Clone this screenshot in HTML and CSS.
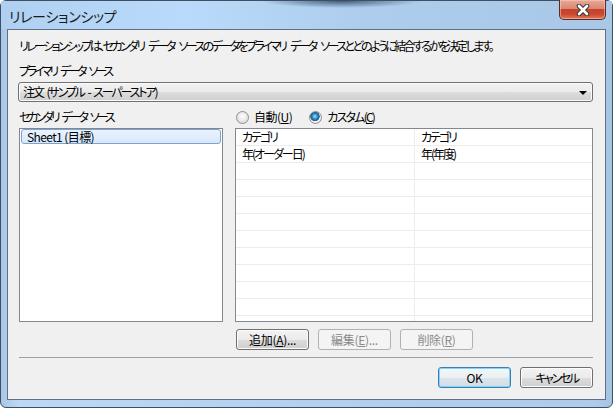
FILE: index.html
```html
<!DOCTYPE html>
<html lang="ja">
<head>
    <meta charset="UTF-8">
    <title>リレーションシップ</title>
    <link rel="stylesheet" href="styles.css">
</head>
<body>
    <div class="window">
        <!-- Title bar -->
        <div class="titlebar">
            <span class="title">リレーションシップ</span>
        </div>
        <div class="close-btn">
            <svg width="14" height="12" viewBox="0 0 14 12">
                <path d="M3 2 L11 10 M11 2 L3 10" stroke="#3a3a3a" stroke-width="4.6" stroke-linecap="round" fill="none"/>
                <path d="M3 2 L11 10 M11 2 L3 10" stroke="#ffffff" stroke-width="2.6" stroke-linecap="round" fill="none"/>
            </svg>
        </div>

        <!-- Dialog body -->
        <div class="client">
            <p class="intro">リレーションシップは、セカンダリ データ ソースのデータをプライマリ データ ソースとどのように結合するかを決定します。</p>

            <div class="label primary-label">プライマリ データ ソース</div>
            <div class="combo">
                <span class="combo-text">注文 (サンプル - スーパーストア)</span>
                <span class="arrow"></span>
            </div>

            <div class="panes">
                <div class="left-pane">
                    <div class="label">セカンダリ データ ソース</div>
                    <div class="listbox">
                        <div class="list-item selected">Sheet1 (目標)</div>
                    </div>
                </div>

                <div class="right-pane">
                    <div class="radios">
                        <label class="radio"><span class="radio-dot"></span><span class="radio-text">自動(<u>U</u>)</span></label>
                        <label class="radio checked"><span class="radio-dot"></span><span class="radio-text kana">カスタム(<u>C</u>)</span></label>
                    </div>
                    <div class="grid">
                        <div class="grid-row"><div class="cell">カテゴリ</div><div class="cell">カテゴリ</div></div>
                        <div class="grid-row"><div class="cell">年(オーダー日)</div><div class="cell">年(年度)</div></div>
                        <div class="grid-row"><div class="cell"></div><div class="cell"></div></div>
                        <div class="grid-row"><div class="cell"></div><div class="cell"></div></div>
                        <div class="grid-row"><div class="cell"></div><div class="cell"></div></div>
                        <div class="grid-row"><div class="cell"></div><div class="cell"></div></div>
                        <div class="grid-row"><div class="cell"></div><div class="cell"></div></div>
                        <div class="grid-row"><div class="cell"></div><div class="cell"></div></div>
                        <div class="grid-row"><div class="cell"></div><div class="cell"></div></div>
                        <div class="grid-row"><div class="cell"></div><div class="cell"></div></div>
                        <div class="grid-row"><div class="cell"></div><div class="cell"></div></div>
                        <div class="grid-row"><div class="cell"></div><div class="cell"></div></div>
                    </div>
                    <div class="grid-buttons">
                        <button class="btn">追加(<u>A</u>)...</button>
                        <button class="btn" disabled>編集(<u>E</u>)...</button>
                        <button class="btn" disabled>削除(<u>R</u>)</button>
                    </div>
                </div>
            </div>

            <div class="separator"></div>

            <div class="footer">
                <button class="btn default">OK</button>
                <button class="btn kana">キャンセル</button>
            </div>
        </div>
    </div>
</body>
</html>
```

FILE: styles.css
```css
/* Windows 7 style dialog */
html, body {
    margin: 0;
    padding: 0;
}

body {
    width: 613px;
    height: 408px;
    overflow: hidden;
    background: #ffffff;
    font-family: "Noto Sans CJK JP", sans-serif;
    font-size: 12px;
    color: #000000;
    font-feature-settings: "palt";
}

.window {
    position: relative;
    box-sizing: border-box;
    width: 613px;
    height: 408px;
    padding: 0 6px 7px 6px;
    border: 1px solid #3d4f63;
    border-radius: 6px;
    display: flex;
    flex-direction: column;
    background: linear-gradient(to right, #a9c7e6, #bcd8f4 3%, #b3d1ef 50%, #aecbe9 97%, #a5c3e2);
}

.titlebar {
    flex-shrink: 0;
    height: 28px;
    margin: 0 -6px;
    padding-left: 8px;
    display: flex;
    align-items: center;
    background:
        radial-gradient(ellipse 80px 7px at 340px 0, rgba(30, 55, 85, 0.75), rgba(30, 55, 85, 0) 100%),
        linear-gradient(to right, #afd0f0, #b9dafa 30%, #aecdec 60%, #a9c8e7);
}

.title {
    font-size: 14px;
    letter-spacing: -0.3px;
    color: #1b1b1b;
    margin-top: 1px;
}

.close-btn {
    position: absolute;
    top: -1px;
    right: 6px;
    width: 47px;
    height: 20px;
    box-sizing: border-box;
    border: 1px solid #5a2a22;
    border-top: none;
    border-radius: 0 0 5px 5px;
    background: linear-gradient(#e8a796, #d88a75 45%, #c5432b 50%, #c9492f 75%, #e07a5e);
    box-shadow: inset 0 0 0 1px rgba(255, 210, 200, 0.5);
    display: flex;
    align-items: center;
    justify-content: center;
}

.client {
    flex: 1;
    min-height: 0;
    border: 1px solid #5f7084;
    background: #f0f0f0;
    padding: 0 12px 0 10px;
}

.intro {
    margin: 9px 0 0 1px;
    line-height: 14px;
    white-space: nowrap;
    letter-spacing: -2.6px;
    word-spacing: 4.5px;
}

.label {
    line-height: 14px;
    margin-left: 1px;
    letter-spacing: -3.1px;
    word-spacing: 4.5px;
}

.primary-label {
    margin-top: 11px;
}

.combo {
    margin-top: 4px;
    height: 20px;
    box-sizing: border-box;
    border: 1px solid #707070;
    border-radius: 3px;
    background: linear-gradient(#f2f2f2, #ebebeb 50%, #dddddd 51%, #cfcfcf);
    box-shadow: inset 0 0 0 1px #fbfbfb;
    display: flex;
    align-items: center;
    justify-content: space-between;
    padding: 0 5px 0 4px;
    line-height: 16px;
}

.combo-text {
    letter-spacing: -2.1px;
    word-spacing: 3px;
}

.arrow {
    width: 0;
    height: 0;
    border-left: 4px solid transparent;
    border-right: 4px solid transparent;
    border-top: 4px solid #000000;
    margin-top: 1px;
}

.panes {
    margin-top: 8px;
    display: flex;
    gap: 12px;
}

.left-pane {
    width: 205px;
}

.right-pane {
    flex: 1;
}

.listbox {
    margin: 4px 0 0 1px;
    height: 194px;
    box-sizing: border-box;
    border: 1px solid #828790;
    background: #ffffff;
    padding: 0 1px;
}

.list-item {
    height: 15px;
    line-height: 13px;
    padding-left: 5px;
    box-sizing: border-box;
    letter-spacing: -0.6px;
}

.list-item.selected {
    border: 1px solid #7da2ce;
    border-radius: 3px;
    background: linear-gradient(#eaf3fe, #d7e8fc);
}

.radios {
    display: flex;
    height: 14px;
    align-items: center;
    gap: 17px;
    padding-left: 1px;
}

.radio {
    display: flex;
    align-items: center;
    gap: 5px;
}

.radio-text {
    line-height: 14px;
    letter-spacing: -0.5px;
}

.radio-text.kana {
    letter-spacing: -1.8px;
}

.radio-dot {
    width: 11px;
    height: 11px;
    border-radius: 50%;
    border: 1px solid #8e8f8f;
    background: radial-gradient(circle at 50% 40%, #ffffff, #e4e4e4 60%, #cfcfcf);
    box-sizing: content-box;
}

.radio.checked .radio-dot {
    background: radial-gradient(circle at 45% 40%, #b7e4fb 0, #3f9fd9 2px, #1d5f95 4px, #2b6ea3 4.5px, #f2f2f2 5px, #d8d8d8 100%);
}

.grid {
    margin-top: 4px;
    height: 194px;
    box-sizing: border-box;
    border: 1px solid #828790;
    background: #ffffff;
    overflow: hidden;
}

.grid-row {
    display: flex;
    height: 17px;
    box-sizing: border-box;
    border-bottom: 1px solid #ececec;
}

.cell {
    line-height: 16px;
    padding-left: 6px;
    box-sizing: border-box;
    letter-spacing: -2px;
}

.cell:first-child {
    width: 179px;
    border-right: 1px solid #ececec;
}

.grid-buttons {
    margin-top: 7px;
    display: flex;
    gap: 9px;
    padding-left: 1px;
}

.btn {
    width: 73px;
    height: 21px;
    padding: 0;
    font-family: inherit;
    font-size: 12px;
    font-feature-settings: "palt";
    letter-spacing: -0.3px;
    color: #000000;
    border: 1px solid #707070;
    border-radius: 3px;
    background: linear-gradient(#f2f2f2, #ebebeb 50%, #dddddd 51%, #cfcfcf);
    box-shadow: inset 0 0 0 1px #fcfcfc;
}

.btn.kana {
    letter-spacing: -2.4px;
}

.btn:disabled {
    color: #8a8a8a;
    border-color: #adb2b5;
    background: #f4f4f4;
    box-shadow: none;
}

.btn.default {
    border-color: #3c7fb1;
    background: linear-gradient(#f4f7f9, #eaeff3 50%, #dde5eb 51%, #d3dde5);
    box-shadow: inset 0 0 0 1px #7fd4f8;
}

.separator {
    margin-top: 7px;
    height: 1px;
    background: #a0a0a0;
    margin-left: 1px;
}

.footer {
    margin-top: 9px;
    display: flex;
    justify-content: flex-end;
    gap: 9px;
}
```
